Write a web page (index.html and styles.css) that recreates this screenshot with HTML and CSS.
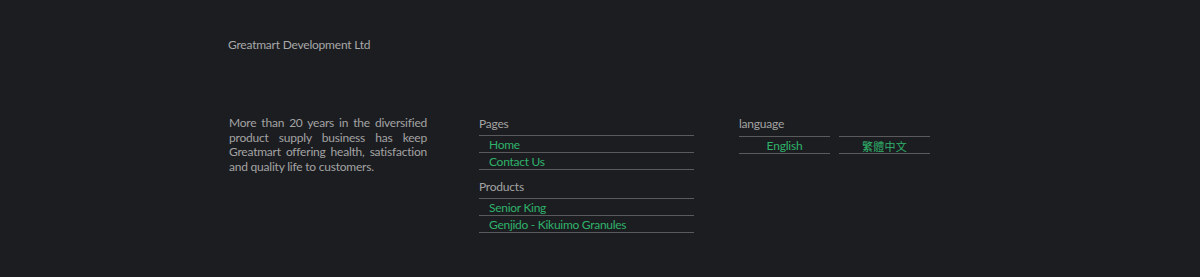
FILE: index.html
```html
<!DOCTYPE html>
<html lang="en">
<head>
    <meta charset="UTF-8">
    <meta name="viewport" content="width=device-width, initial-scale=1.0">
    <title>Greatmart Development Ltd</title>
    <link rel="stylesheet" href="styles.css">
</head>
<body>
    <!-- Pied de page -->
    <footer class="footer">
        <div class="brand">Greatmart Development Ltd</div>

        <div class="columns">
            <!-- Texte de présentation -->
            <p class="about">More than 20 years in the diversified product supply business has keep Greatmart offering health, satisfaction and quality life to customers.</p>

            <!-- Liens -->
            <div class="links">
                <div class="col-title">Pages</div>
                <ul class="link-list">
                    <li><a href="#">Home</a></li>
                    <li><a href="#">Contact Us</a></li>
                </ul>

                <div class="col-title second">Products</div>
                <ul class="link-list">
                    <li><a href="#">Senior King</a></li>
                    <li><a href="#">Genjido - Kikuimo Granules</a></li>
                </ul>
            </div>

            <!-- Langues -->
            <div class="language">
                <div class="col-title lang-title">language</div>
                <div class="lang-group">
                    <a href="#" class="lang">English</a>
                    <a href="#" class="lang zh">繁體中文</a>
                </div>
            </div>
        </div>
    </footer>
</body>
</html>
```

FILE: styles.css
```css
/* Fond sombre sur toute la page */
body {
    margin: 0;
    padding: 0;
    background-color: #1c1d21;
    color: #a3a3a3;
    font-family: Lato, sans-serif;
    font-size: 12px;
    letter-spacing: -0.22px;
    height: 277px;
}

.footer {
    padding: 37px 0 0 228px;
}

.brand {
    line-height: 16px;
    color: #a8a8a8;
}

.columns {
    display: flex;
    align-items: flex-start;
    margin-top: 62px;
}

.about {
    width: 198px;
    margin: 1px 0 0 1px;
    line-height: 14.5px;
    text-align: justify;
    color: #a3a3a3;
}

.links {
    width: 215px;
    margin-left: 52px;
    margin-top: 1px;
}

.col-title {
    line-height: 16px;
    margin-bottom: 3px;
    color: #a3a3a3;
}

.col-title.second {
    margin-top: 9px;
}

.link-list {
    list-style: none;
    margin: 0;
    padding: 0;
    border-top: 1px solid #5a5a5c;
}

.link-list li {
    height: 14px;
    padding: 2px 0 0 10px;
    line-height: 14px;
    border-bottom: 1px solid #5a5a5c;
    letter-spacing: -0.28px;
}

a {
    color: #2fb26a;
    text-decoration: none;
}

.language {
    width: 191px;
    margin-left: 45px;
    margin-top: 1px;
}

.lang-title {
    margin-bottom: 4px;
}

.lang-group {
    display: flex;
    gap: 9px;
}

.lang {
    flex: 1;
    height: 14px;
    padding-top: 2px;
    line-height: 14px;
    text-align: center;
    border-top: 1px solid #5a5a5c;
    border-bottom: 1px solid #5a5a5c;
}

.zh {
    font-family: "Noto Sans CJK TC", sans-serif;
    font-size: 11px;
    letter-spacing: 0.2px;
}
```
